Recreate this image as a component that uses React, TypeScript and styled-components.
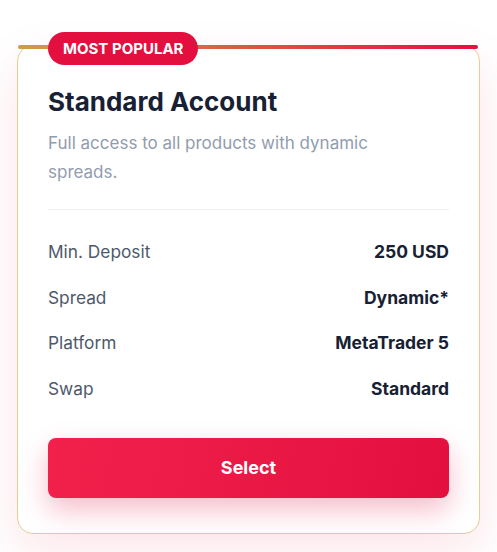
import React from "react";
import styled, { createGlobalStyle } from "styled-components";

const Global = createGlobalStyle`
  html, body { margin: 0; padding: 0; background: #ffffff; }
  body { font-family: Inter, "Noto Sans", sans-serif; -webkit-font-smoothing: antialiased; }
`;

const Page = styled.div`
  padding: 45px 17px 20px 17px;
  width: 497px;
  box-sizing: border-box;
`;

const Card = styled.div`
  position: relative;
  width: 463px;
  box-sizing: border-box;
  border: 1px solid #e6cd92;
  border-radius: 16px;
  background: #ffffff;
  padding: 40px 30px 35px 30px;
  box-shadow: 0 18px 50px rgba(227, 16, 63, 0.11);
`;

const TopBar = styled.div`
  position: absolute;
  top: -1px;
  left: 0;
  right: 1px;
  height: 4px;
  border-radius: 2px;
  background: linear-gradient(90deg, #c9a043 0%, #d9644a 40%, #e3103f 100%);
`;

const Badge = styled.div`
  position: absolute;
  top: -14px;
  left: 30px;
  height: 33px;
  padding: 0 15px;
  display: flex;
  align-items: center;
  border-radius: 17px;
  background: #e3103f;
  color: #ffffff;
  font-size: 15px;
  font-weight: 700;
  text-transform: uppercase;
`;

const Title = styled.h2`
  margin: 0;
  font-size: 26px;
  line-height: 32.5px;
  font-weight: 700;
  color: #172133;
`;

const Desc = styled.p`
  margin: 10px 0 0 0;
  max-width: 380px;
  font-size: 17px;
  line-height: 29px;
  color: #919cae;
`;

const Divider = styled.hr`
  border: none;
  height: 1px;
  background: #eef0f3;
  margin: 22px 0 28px 0;
`;

const Specs = styled.div`
  display: flex;
  flex-direction: column;
  gap: 18px;
`;

const Row = styled.div`
  display: flex;
  justify-content: space-between;
  align-items: center;
  height: 27.8px;
`;

const Label = styled.span`
  font-size: 17.3px;
  color: #4d596b;
`;

const Value = styled.span`
  font-size: 17.5px;
  font-weight: 700;
  color: #172133;
`;

const Button = styled.button`
  margin-top: 35px;
  width: 100%;
  height: 60px;
  border: none;
  border-radius: 8px;
  background: linear-gradient(100deg, #f1214c 0%, #e3103f 100%);
  color: #ffffff;
  font-family: Inter, "Noto Sans", sans-serif;
  font-size: 18px;
  font-weight: 700;
  box-shadow: 0 12px 28px rgba(227, 16, 63, 0.28);
  cursor: pointer;
`;

const specs = [
  ["Min. Deposit", "250 USD"],
  ["Spread", "Dynamic*"],
  ["Platform", "MetaTrader 5"],
  ["Swap", "Standard"],
];

export default function App() {
  return (
    <>
      <Global />
      <Page>
        <Card>
          <TopBar />
          <Badge>Most Popular</Badge>
          <Title>Standard Account</Title>
          <Desc>Full access to all products with dynamic spreads.</Desc>
          <Divider />
          <Specs>
            {specs.map(([l, v]) => (
              <Row key={l}>
                <Label>{l}</Label>
                <Value>{v}</Value>
              </Row>
            ))}
          </Specs>
          <Button>Select</Button>
        </Card>
      </Page>
    </>
  );
}
